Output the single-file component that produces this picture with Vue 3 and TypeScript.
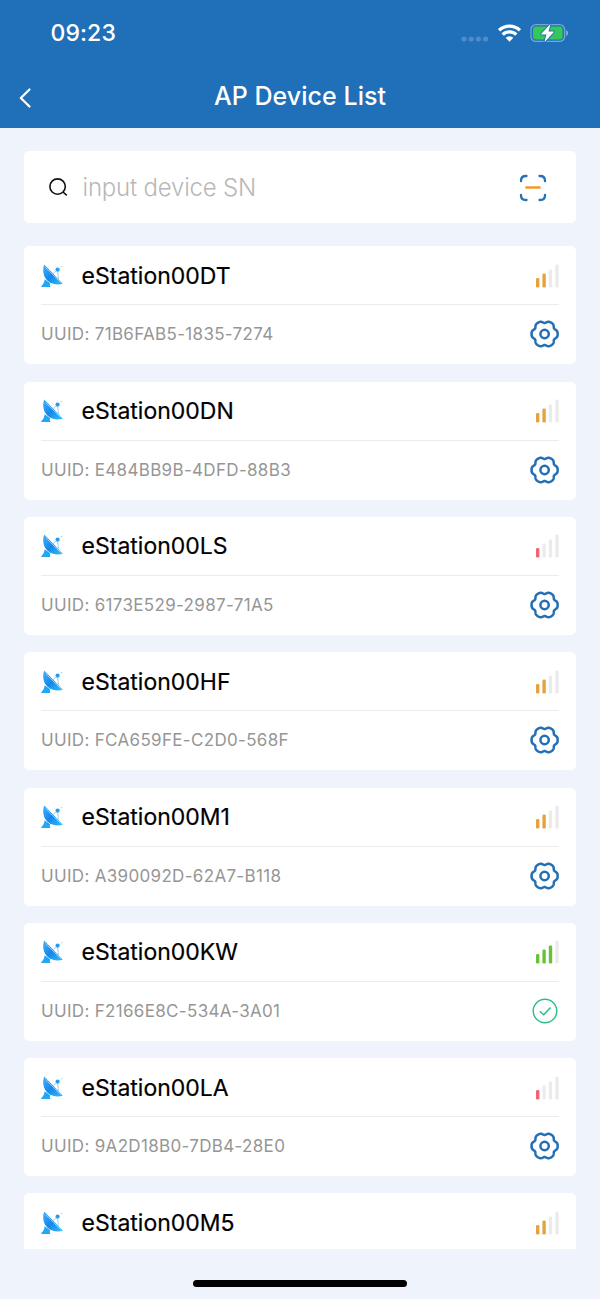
<script setup lang="ts">
interface Device {
  name: string
  uuid?: string
  level: number
  connected?: boolean
}

const devices: Device[] = [
  { name: 'eStation00DT', uuid: '71B6FAB5-1835-7274', level: 2 },
  { name: 'eStation00DN', uuid: 'E484BB9B-4DFD-88B3', level: 2 },
  { name: 'eStation00LS', uuid: '6173E529-2987-71A5', level: 1 },
  { name: 'eStation00HF', uuid: 'FCA659FE-C2D0-568F', level: 2 },
  { name: 'eStation00M1', uuid: 'A390092D-62A7-B118', level: 2 },
  { name: 'eStation00KW', uuid: 'F2166E8C-534A-3A01', level: 3, connected: true },
  { name: 'eStation00LA', uuid: '9A2D18B0-7DB4-28E0', level: 1 },
  { name: 'eStation00M5', level: 2 },
]

const levelColors: Record<number, string> = { 1: '#ee6670', 2: '#e6a23c', 3: '#67c23a' }
const bars = [
  { x: 1, y: 14, h: 9.5 },
  { x: 7.4, y: 9.6, h: 13.9 },
  { x: 13.8, y: 5.4, h: 18.1 },
  { x: 20.3, y: 0.6, h: 22.9 },
]

function barColor(index: number, level: number): string {
  return index < level ? levelColors[level] : '#ebebeb'
}

// Six broad lobes with narrow notches, centred in a 30x30 box.
const gearPath =
  Array.from({ length: 120 }, (_, i) => {
    const t = (i * Math.PI) / 60
    const r = 12.3 + 1.05 * (Math.cos(6 * t) - 0.27 * Math.cos(12 * t))
    return `${i ? 'L' : 'M'}${(15 + r * Math.cos(t)).toFixed(2)} ${(15 + r * Math.sin(t)).toFixed(2)}`
  }).join('') + 'Z'
</script>

<template>
  <div class="screen">
    <header class="header">
      <div class="status">
        <span class="time">09:23</span>
        <div class="indicators">
          <svg class="dots" width="28" height="6" viewBox="0 0 28 6">
            <circle v-for="i in 4" :key="i" :cx="3 + (i - 1) * 7.2" cy="3" r="2.6" fill="#4d8cc8" />
          </svg>
          <svg class="wifi" width="23" height="18" viewBox="0 0 23 18">
            <g fill="none" stroke="#fff" stroke-width="3.3">
              <path d="M1.1 6.3A15 15 0 0 1 21.9 6.3" />
              <path d="M4.7 10.7A9.6 9.6 0 0 1 18.3 10.7" />
            </g>
            <path d="M7.7 13.8A5.4 5.4 0 0 1 15.3 13.8L11.5 17.8Z" fill="#fff" />
          </svg>
          <svg class="battery" width="39" height="20" viewBox="0 0 39 20">
            <rect x="1" y="1.6" width="33.6" height="16.8" rx="5" fill="none" stroke="#76a7d6" stroke-width="1.3" />
            <rect x="3" y="3.6" width="29.6" height="12.8" rx="3.2" fill="#34c759" />
            <path d="M36.2 7.2C38.8 8 38.8 12 36.2 12.8Z" fill="#83b0da" />
            <path
              d="M20.6 .7L11.3 10.8Q11 11.5 11.8 11.5H16.5L14.4 19.3L23.7 9.2Q24.1 8.4 23.2 8.4H18.5Z"
              fill="#fff" stroke="#1f70b8" stroke-width="1.8" paint-order="stroke" stroke-linejoin="round"
            />
          </svg>
        </div>
      </div>
      <div class="nav">
        <svg class="back" width="14" height="22" viewBox="0 0 14 22">
          <path d="M11.5 2.5L2.8 11L11.5 19.5" fill="none" stroke="#fff" stroke-width="2.3" stroke-linecap="round" stroke-linejoin="round" />
        </svg>
        <h1 class="title">AP Device List</h1>
      </div>
    </header>

    <div class="search">
      <svg class="lens" width="20" height="20" viewBox="0 0 20 20" fill="none" stroke="#111" stroke-width="1.6">
        <circle cx="8.6" cy="8.6" r="7.7" />
        <path d="M14 14L17.8 17.4" />
      </svg>
      <span class="placeholder">input device SN</span>
      <svg class="scan" width="28" height="28" viewBox="0 0 28 28" fill="none" stroke-width="2.3" stroke-linecap="round">
        <g stroke="#2672b6">
          <path d="M2 7.2V6.8Q2 2 6.8 2H7.5" />
          <path d="M20.5 2H21.2Q26 2 26 6.8V7.2" />
          <path d="M26 20.8V21.2Q26 26 21.2 26H20.5" />
          <path d="M7.5 26H6.8Q2 26 2 21.2V20.8" />
        </g>
        <path d="M7.3 13.5H20.7" stroke="#f39a24" />
      </svg>
    </div>

    <main class="list">
      <article v-for="device in devices" :key="device.name" class="card">
        <div class="row top">
          <svg class="dish" width="23" height="24" viewBox="0 0 23 24">
            <defs>
              <linearGradient id="dishFill" x1="0" y1="0" x2="1" y2="1">
                <stop offset="0" stop-color="#46b2fb" />
                <stop offset=".5" stop-color="#1487ec" />
                <stop offset="1" stop-color="#35c0fa" />
              </linearGradient>
            </defs>
            <path d="M3.2 .6C1.2 6 2 12.6 6.6 16.8C10.8 20.4 16.4 21.4 21.8 19.8Z" fill="url(#dishFill)" />
            <path d="M4.6 3.6L19.4 18.4" stroke="#a9dcff" stroke-width=".7" />
            <path d="M11 10.5L16.2 6M16.6 6L17.4 15" stroke="#7cc6f8" stroke-width=".8" />
            <circle cx="16.6" cy="5.6" r="2.1" fill="#279cf2" />
            <path d="M19.6 3L21.4 2.4" stroke="#b4dffb" stroke-width="1.2" />
            <path d="M3.6 15.2L9.2 19.2Q8.2 21 9.4 23H.2Q.4 21.2 2 20.2Q3.4 18.2 3.6 15.2Z" fill="#22a7f5" />
          </svg>
          <span class="name">{{ device.name }}</span>
          <svg class="signal" width="24" height="24" viewBox="0 0 24 24">
            <rect
              v-for="(bar, i) in bars" :key="i" :x="bar.x" :y="bar.y" width="3.4" :height="bar.h"
              rx="1.3" :fill="barColor(i, device.level)"
            />
          </svg>
        </div>
        <div v-if="device.uuid" class="row bottom">
          <span class="uuid">UUID: {{ device.uuid }}</span>
          <svg v-if="device.connected" class="action" width="30" height="30" viewBox="0 0 30 30" fill="none" stroke="#2cbd84">
            <circle cx="15" cy="15" r="11.8" stroke-width="1.4" />
            <path d="M9.8 15.2L13.7 18.8L20.6 11.4" stroke-width="1.5" />
          </svg>
          <svg v-else class="action" width="30" height="30" viewBox="0 0 30 30" fill="none" stroke="#236fb6" stroke-width="2.5">
            <g transform="translate(-.4 0)">
              <path :d="gearPath" stroke-linejoin="round" />
              <circle cx="15" cy="15" r="4.2" />
            </g>
          </svg>
        </div>
      </article>
    </main>

    <footer class="home"><div class="home-bar"></div></footer>
  </div>
</template>

<style>
body {
  margin: 0;
}
</style>

<style scoped>
.screen {
  box-sizing: border-box;
  width: 600px;
  height: 1299px;
  display: flex;
  flex-direction: column;
  overflow: hidden;
  background: #eff4fc;
  font-family: Inter, "Liberation Sans", sans-serif;
}
svg {
  display: block;
  flex: none;
}
.header {
  flex: none;
  height: 128px;
  background: #1f70b8;
  color: #fff;
}
.status {
  height: 66px;
  display: flex;
  align-items: center;
  justify-content: space-between;
  padding: 0 31px 0 50.5px;
}
.time {
  font-size: 23px;
  line-height: 28px;
  font-weight: 500;
  letter-spacing: 0.1px;
}
.indicators {
  display: flex;
  align-items: center;
}
.dots {
  margin: 12px 9px 0 0;
}
.wifi {
  margin-right: 9px;
}
.nav {
  height: 62px;
  display: grid;
  grid-template-columns: 100px 1fr 100px;
}
.back {
  margin: 21px 0 0 17.5px;
}
.title {
  margin: 14px 0 0;
  text-align: center;
  font-size: 25px;
  line-height: 32px;
  font-weight: 500;
  letter-spacing: 0.05px;
}
.search {
  flex: none;
  box-sizing: border-box;
  height: 72px;
  margin: 23px 24px 0;
  padding: 0 29px 0 25px;
  display: flex;
  align-items: center;
  background: #fff;
  border-radius: 5px;
}
.lens {
  margin-top: 2px;
}
.placeholder {
  flex: 1;
  margin: 2px 0 0 13.5px;
  font-size: 24px;
  line-height: 30px;
  font-weight: 300;
  letter-spacing: -0.2px;
  color: #b8b8b8;
  white-space: nowrap;
}
.scan {
  margin-top: 1px;
}
.list {
  flex: none;
  height: 1002.6px;
  margin: 23.4px 24px 0;
  display: flex;
  flex-direction: column;
  gap: 17.3px;
  overflow: hidden;
}
.card {
  flex: none;
  box-sizing: border-box;
  height: 118px;
  padding: 0 17px;
  background: #fff;
  border-radius: 5px;
}
.row {
  box-sizing: border-box;
  display: flex;
  align-items: center;
}
.top {
  height: 59px;
  border-bottom: 1px solid #ebebeb;
}
.bottom {
  height: 58px;
}
.dish {
  margin-top: 1px;
}
.name {
  flex: 1;
  margin: 1px 0 0 17.6px;
  font-size: 23px;
  line-height: 30px;
  font-weight: 400;
  color: #000;
  -webkit-text-stroke: 0.2px #000;
}
.uuid {
  flex: 1;
  font-size: 17px;
  line-height: 24px;
  letter-spacing: 0.32px;
  color: #969696;
}
.action {
  margin-right: -0.5px;
}
.signal {
  margin-top: 1px;
}
.home {
  flex: 1;
  display: flex;
  justify-content: center;
  align-items: flex-start;
  padding-top: 31px;
}
.home-bar {
  width: 214px;
  height: 7px;
  border-radius: 4px;
  background: #000;
}
</style>
